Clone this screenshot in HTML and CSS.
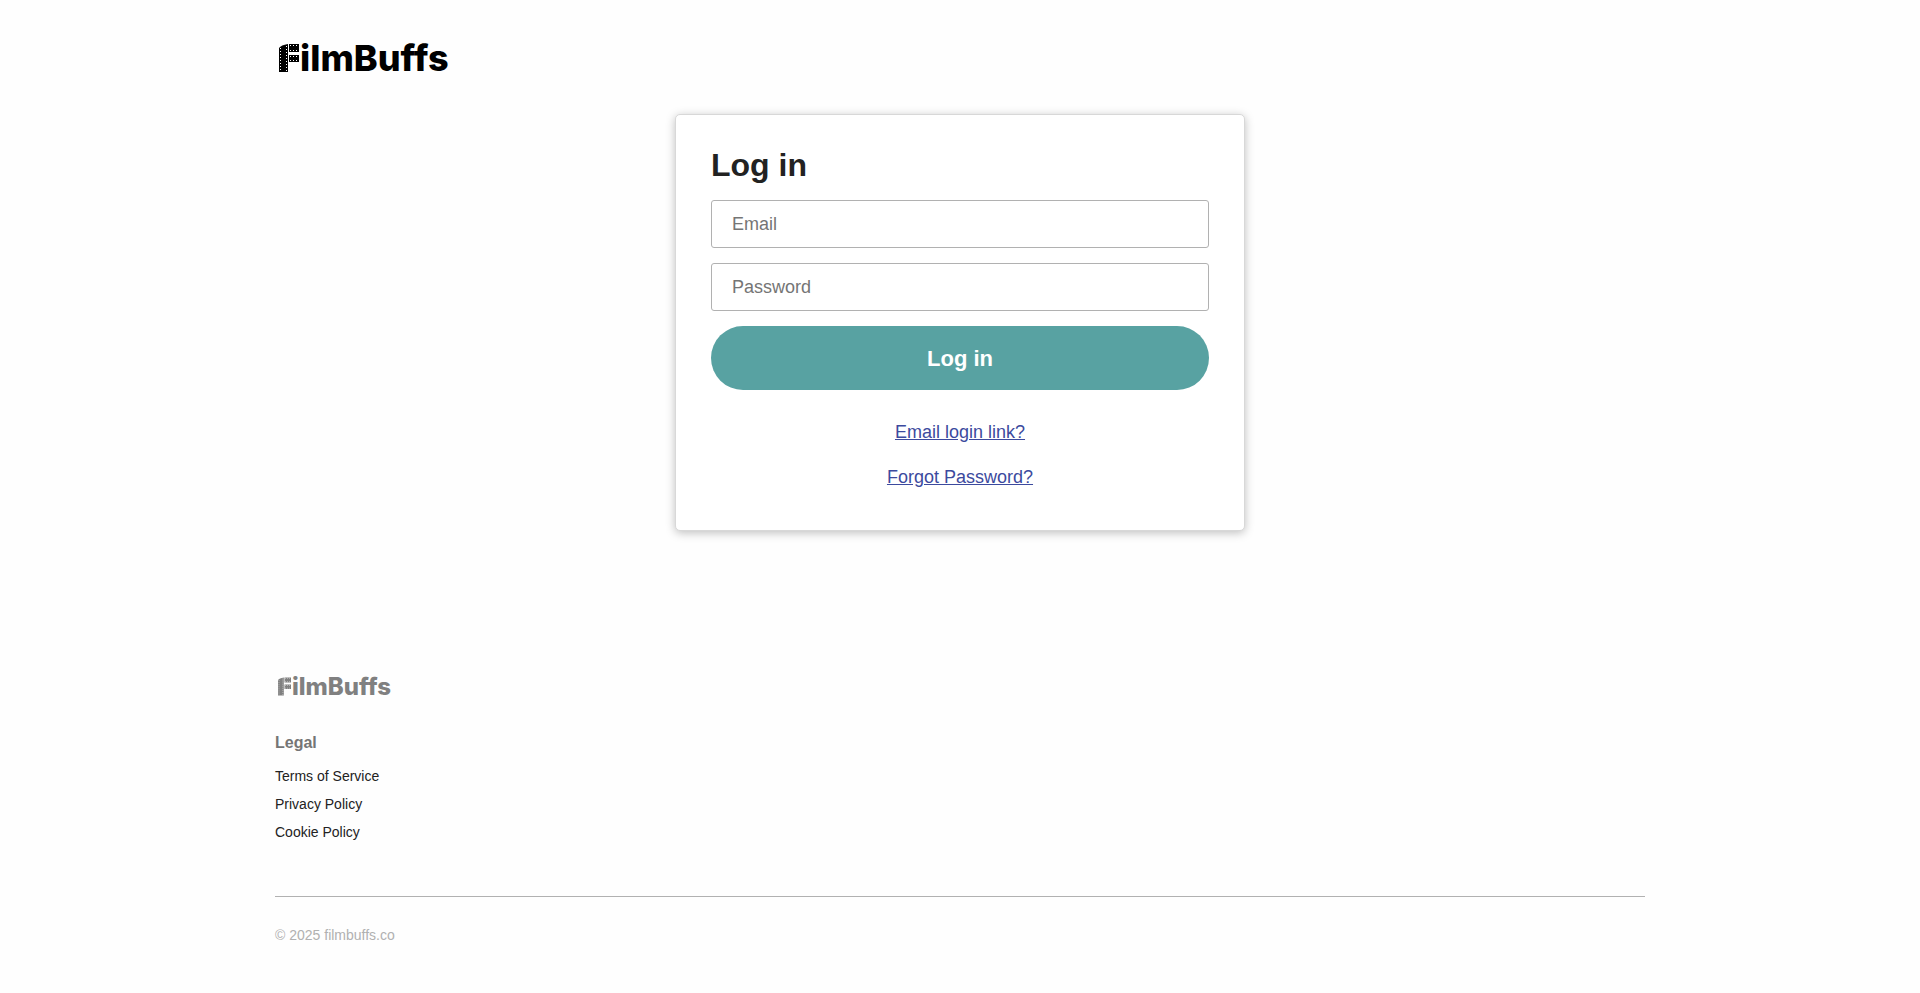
FILE: index.html
```html
<!DOCTYPE html>
<html lang="en">

<head>
    <meta charset="utf-8">
    <title>Log in - FilmBuffs</title>
    <meta name="viewport" content="width=device-width, initial-scale=1">
    <link rel="stylesheet" href="styles.css">
</head>

<body>
    <!-- film strip F, shared by the header and footer logos -->
    <svg class="defs" aria-hidden="true">
        <symbol id="filmF" viewBox="0 0 20 28">
            <path d="M0 28V4Q2 1 9 0V28Z" fill="currentColor" />
            <path d="M10 0H20V8H10Z M10 11H20V18H10Z" fill="currentColor" />
            <path d="M1.5 4V28 M7.5 2V28" stroke="#fff" stroke-width="1" stroke-dasharray="1 2" fill="none" />
            <path d="M11 1.5H20 M11 6.5H20 M11 12.5H20 M11 16.5H20" stroke="#fff" stroke-width="1"
                stroke-dasharray="1 2" fill="none" />
        </symbol>
    </svg>

    <header class="header container">
        <a class="logo" href="#">
            <svg class="logo-mark" aria-hidden="true"><use href="#filmF" /></svg>
            <span>ilmBuffs</span>
        </a>
    </header>

    <main>
        <form class="card">
            <h1>Log in</h1>
            <input type="email" name="email" placeholder="Email" aria-label="Email">
            <input type="password" name="password" placeholder="Password" aria-label="Password">
            <button type="submit">Log in</button>
            <div class="card-links">
                <a href="#">Email login link?</a>
                <a href="#">Forgot Password?</a>
            </div>
        </form>
    </main>

    <footer class="footer container">
        <a class="logo logo-small" href="#">
            <svg class="logo-mark" aria-hidden="true"><use href="#filmF" /></svg>
            <span>ilmBuffs</span>
        </a>
        <h2>Legal</h2>
        <ul>
            <li><a href="#">Terms of Service</a></li>
            <li><a href="#">Privacy Policy</a></li>
            <li><a href="#">Cookie Policy</a></li>
        </ul>
        <p class="copyright">© 2025 filmbuffs.co</p>
    </footer>
</body>

</html>
```
FILE: styles.css
```css
* {
    box-sizing: border-box;
}

body {
    margin: 0;
    background-color: #fefefe;
    color: #222;
    font-family: "Liberation Sans", Arial, sans-serif;
    font-size: 18px;
    line-height: 25px;
}

.defs {
    display: none;
}

.container {
    max-width: 1440px;
    margin: 0 auto;
    padding: 0 35px;
}

.header {
    padding-top: 39px;
    padding-bottom: 37px;
}

.logo {
    display: flex;
    align-items: center;
    gap: 1px;
    width: max-content;
    padding-left: 4px;
    color: #000;
    font-family: Inter, sans-serif;
    font-size: 36px;
    font-weight: 800;
    line-height: 38px;
    text-decoration: none;
}

.logo-mark {
    width: 20px;
    height: 28px;
}

.card {
    display: flex;
    flex-direction: column;
    gap: 15px;
    max-width: 570px;
    margin: 0 auto;
    padding: 30px 35px 40px;
    background-color: #fff;
    border: 1px solid #d8d8d8;
    border-radius: 5px;
    box-shadow: 0 2px 10px rgba(0, 0, 0, 0.25);
}

h1 {
    margin: 0;
    font-size: 32px;
    line-height: 40px;
}

input {
    width: 100%;
    height: 48px;
    padding: 0 20px;
    background-color: #fff;
    border: 1px solid #b1b1b1;
    border-radius: 3px;
    color: #222;
    font-family: inherit;
    font-size: 18px;
}

input::placeholder {
    color: #757575;
}

button {
    height: 64px;
    padding: 2px 0 0;
    background-color: #58a2a2;
    border: none;
    border-radius: 35px;
    color: #fff;
    font-family: inherit;
    font-size: 22px;
    font-weight: bold;
    cursor: pointer;
}

.card-links {
    display: flex;
    flex-direction: column;
    align-items: center;
    gap: 20px;
    margin-top: 15px;
}

.card-links a {
    color: #3c4a9e;
}

.footer {
    margin-top: 143px;
    padding-bottom: 30px;
    font-size: 14px;
}

.logo-small {
    padding-left: 3px;
    color: #808080;
    font-size: 24px;
    line-height: 25px;
}

.logo-small .logo-mark {
    width: 13px;
    height: 19px;
}

h2 {
    margin: 31px 0 9px;
    color: #757575;
    font-size: 16px;
    line-height: 25px;
}

ul {
    display: flex;
    flex-direction: column;
    gap: 3px;
    margin: 0;
    padding: 0 0 51px;
    border-bottom: 1px solid #b1b1b1;
    list-style: none;
}

ul a {
    color: #222;
    text-decoration: none;
}

.copyright {
    margin: 26px 0 0;
    color: #b1b1b1;
}
```
